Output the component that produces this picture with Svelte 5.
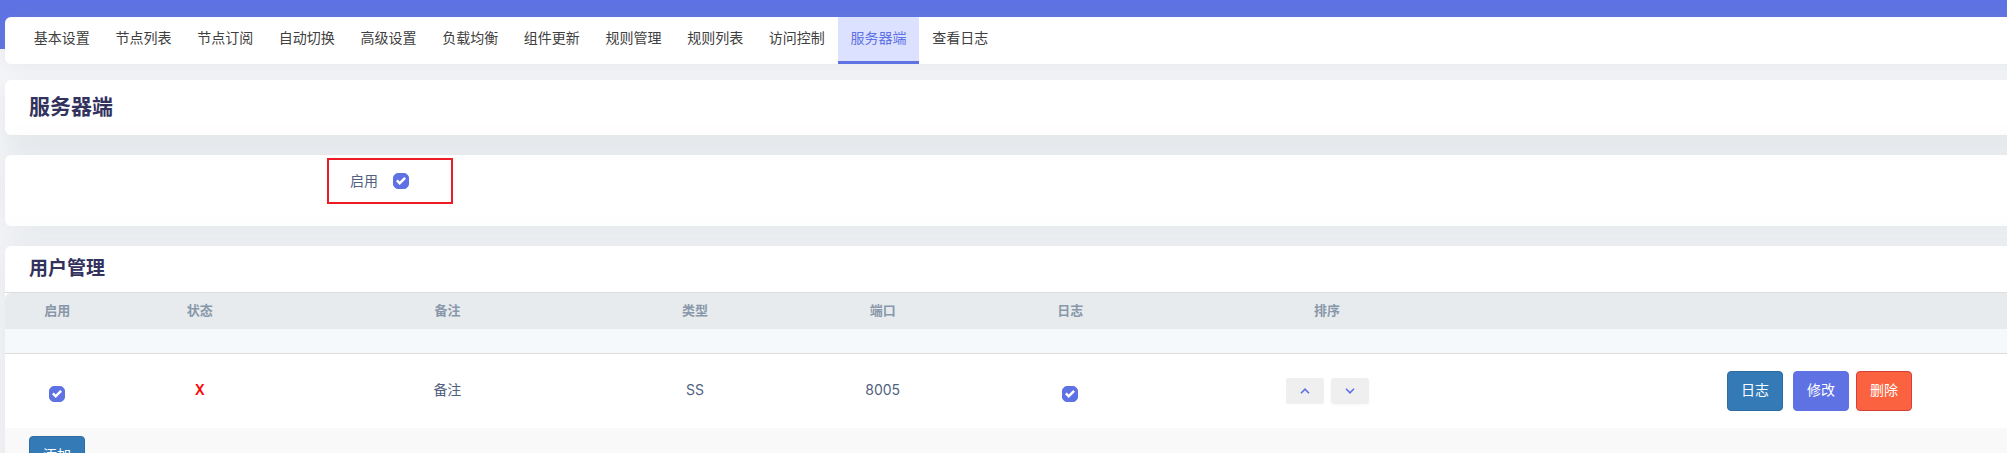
<script>
  const tabs = [
    '基本设置', '节点列表', '节点订阅', '自动切换', '高级设置', '负载均衡',
    '组件更新', '规则管理', '规则列表', '访问控制', '服务器端', '查看日志'
  ];
  const columns = [
    { id: 'enable', label: '启用', width: 5.15 },
    { id: 'status', label: '状态', width: 8.85 },
    { id: 'remarks', label: '备注', width: 15.5 },
    { id: 'type', label: '类型', width: 8.85 },
    { id: 'port', label: '端口', width: 9.6 },
    { id: 'log', label: '日志', width: 8.85 },
    { id: 'sort', label: '排序', width: 16.4 },
    { id: 'actions', label: '', width: null }
  ];
  let active = $state('服务器端');
  let enabled = $state(true);
  let users = $state([{ enable: true, remarks: '备注', type: 'SS', port: 8005, log: true }]);
</script>

<div class="page">
  <nav class="card">
    <ul class="tabs">
      {#each tabs as tab}
        <li>
          <a href="#top" class:active={tab === active} onclick={() => (active = tab)}>{tab}</a>
        </li>
      {/each}
    </ul>
  </nav>

  <header class="card title"><h2>服务器端</h2></header>

  <section class="card switch">
    <div class="marked">
      <label for="main-enable">启用</label>
      <input id="main-enable" type="checkbox" bind:checked={enabled} />
    </div>
  </section>

  <section class="card users">
    <h3>用户管理</h3>
    <table>
      <colgroup>
        {#each columns as column}
          <col style:width={column.width ? `${column.width}%` : 'auto'} />
        {/each}
      </colgroup>
      <thead>
        <tr>
          {#each columns as column}
            {#if column.label}
              <th id={column.id} scope="col">{column.label}</th>
            {:else}
              <td></td>
            {/if}
          {/each}
        </tr>
        <tr class="descr"><td colspan="8"></td></tr>
      </thead>
      <tbody>
        {#each users as user}
          <tr>
            <td class="data"><input class="low" type="checkbox" aria-labelledby="enable" bind:checked={user.enable} /></td>
            <td class="data"><b>X</b></td>
            <td class="data">{user.remarks}</td>
            <td class="data">{user.type}</td>
            <td class="data">{user.port}</td>
            <td class="data"><input class="low" type="checkbox" aria-labelledby="log" bind:checked={user.log} /></td>
            <td>
              <div class="sort">
                <button type="button" aria-label="上移">
                  <svg viewBox="0 0 10 6"><path d="M1 5.2 5 1.2 9 5.2" /></svg>
                </button>
                <button type="button" class="down" aria-label="下移">
                  <svg viewBox="0 0 10 6"><path d="M1 .8 5 4.8 9 .8" /></svg>
                </button>
              </div>
            </td>
            <td>
              <div class="actions">
                <button type="button" class="btn blue log">日志</button>
                <button type="button" class="btn indigo">修改</button>
                <button type="button" class="btn red">删除</button>
              </div>
            </td>
          </tr>
        {/each}
      </tbody>
    </table>
    <footer><button type="button" class="btn blue">添加</button></footer>
  </section>
</div>

<style>
  :global(body) {
    margin: 0;
    background: #f4f5f7;
  }

  .page {
    box-sizing: border-box;
    height: 100vh;
    overflow: hidden;
    padding: 17px 0 0 5px;
    background: linear-gradient(#5e72e4 49px, #f4f5f7 49px);
    color: #525f7f;
    font: 14px/22px Inter, "Noto Sans CJK SC", sans-serif;
  }

  /* Cards run past the right edge of the window. */
  .card {
    margin-right: -32px;
    background: #fff;
    border-radius: 6px;
    box-shadow: 0 0 32px rgba(136, 152, 170, 0.15);
  }

  nav.card {
    box-shadow: 0 0 20px rgba(136, 152, 170, 0.15);
  }

  .tabs {
    display: grid;
    grid-template-columns: repeat(12, 1fr);
    max-width: 980px;
    margin: 0;
    padding: 0 0 0 16px;
    list-style: none;
  }

  .tabs a {
    display: block;
    padding: 10px 0 12px;
    border-bottom: 3px solid transparent;
    color: #404040;
    text-align: center;
    text-decoration: none;
  }

  .tabs a.active {
    background: #dce1ff;
    border-color: #5e72e4;
    color: #5e72e4;
  }

  .card.title {
    margin-top: 16px;
    padding: 12px 24px 13px;
    box-shadow: 0 10px 24px rgba(136, 152, 170, 0.15);
  }

  h2,
  h3 {
    margin: 0;
    color: #32325d;
    font-weight: 700;
  }

  h2 {
    font-size: 21px;
    line-height: 30px;
  }

  .switch {
    display: flex;
    margin-top: 20px;
    padding: 3px 0 22px 322px;
  }

  .marked {
    display: flex;
    align-items: center;
    gap: 15px;
    padding: 10px 42px 10px 21px;
    border: 2px solid #ed1c24;
  }

  input {
    appearance: none;
    width: 16px;
    height: 16px;
    margin: 0;
    border: 1px solid #adb5bd;
    border-radius: 5px;
    background: #fff;
    vertical-align: middle;
  }

  input:checked {
    border-color: #5e72e4;
    background: #5e72e4 url("data:image/svg+xml,%3Csvg xmlns='http://www.w3.org/2000/svg' viewBox='0 0 8 8'%3E%3Cpath fill='%23fff' d='M6.564.75l-3.59 3.612-1.538-1.55L0 4.26 2.974 7.25 8 2.193z'/%3E%3C/svg%3E") center / 10px no-repeat;
  }

  input.low {
    margin-top: 6px;
  }

  .users {
    margin-top: 20px;
  }

  h3 {
    padding: 8px 24px;
    border-bottom: 1px solid #ddd;
    font-size: 19px;
    line-height: 30px;
  }

  table {
    width: 100%;
    border-collapse: separate;
    border-spacing: 0;
    table-layout: fixed;
  }

  th,
  td {
    padding: 0;
    text-align: center;
  }

  thead th,
  thead td {
    box-sizing: border-box;
    height: 36px;
    padding-bottom: 2px;
    background: #e8ebed;
    color: #8898aa;
    font-size: 13px;
    font-weight: 700;
  }

  thead th:first-child {
    border-top-left-radius: 6px;
  }

  thead .descr td {
    height: 25px;
    background: #f5f9fc;
    border-bottom: 1px solid #ddd;
  }

  tbody td {
    box-sizing: border-box;
    height: 74px;
  }

  tbody .data {
    padding-bottom: 2px;
  }

  b {
    color: red;
    font-weight: 600;
  }

  button {
    border: 0;
    font: inherit;
  }

  .sort,
  .actions {
    display: flex;
    align-items: center;
    gap: 7px;
  }

  .sort {
    justify-content: center;
  }

  .sort button {
    display: grid;
    place-items: center;
    width: 38px;
    height: 26px;
    padding: 0;
    border-radius: 2px;
    background: #efefef;
  }

  .sort .down {
    border-radius: 3px;
    box-shadow: 0 1px 3px rgba(50, 50, 93, 0.05);
  }

  svg {
    width: 10px;
    height: 6px;
    fill: none;
    stroke: #5e72e4;
    stroke-width: 1.6;
  }

  .actions {
    justify-content: flex-end;
    padding-right: 127px;
  }

  .btn {
    height: 40px;
    padding: 0 13px 2px;
    border: 1px solid;
    border-radius: 4px;
    color: #fff;
  }

  .blue {
    background: #337ab7;
    border-color: #2e6da4;
  }

  .indigo {
    background: #5e72e4;
    border-color: #5e72e4;
  }

  .red {
    background: #fb6340;
    border-color: #d43f3a;
  }

  .log {
    margin-right: 3px;
  }

  footer {
    padding: 8px 24px;
    background: #f9f9f9;
  }
</style>
